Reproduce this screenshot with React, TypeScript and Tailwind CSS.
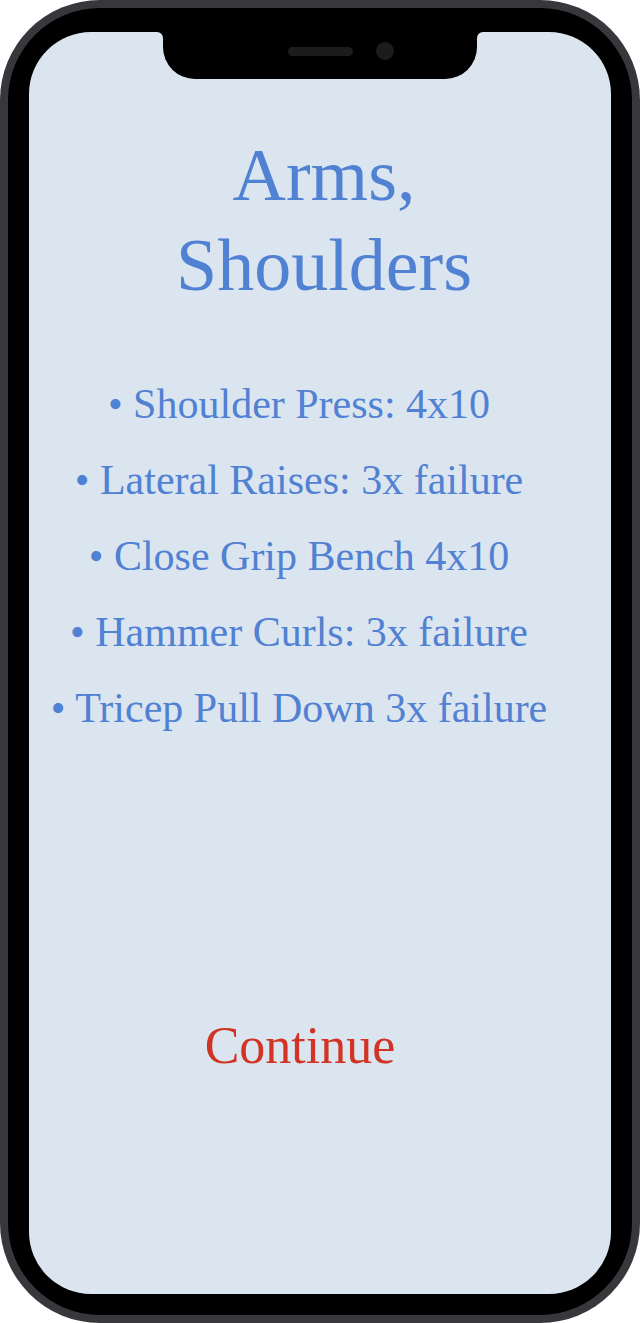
const exercises = [
  'Shoulder Press: 4x10',
  'Lateral Raises: 3x failure',
  'Close Grip Bench 4x10',
  'Hammer Curls: 3x failure',
  'Tricep Pull Down 3x failure',
];

function Notch() {
  return (
    <div className="absolute left-[134px] top-0 w-[314px] h-[47px] bg-black rounded-b-[32px] flex items-start pl-[125px] pt-[10px] gap-[23px]">
      {/* little fillets where the notch meets the screen edge */}
      <div className="absolute -left-[6px] top-0 w-[6px] h-[6px] bg-black">
        <div className="w-full h-full bg-[#dbe5f0] rounded-tr-[6px]" />
      </div>
      <div className="absolute -right-[6px] top-0 w-[6px] h-[6px] bg-black">
        <div className="w-full h-full bg-[#dbe5f0] rounded-tl-[6px]" />
      </div>
      <div className="mt-[5px] w-[65px] h-[9px] rounded-full bg-[#1c1c1c]" />
      <div className="w-[18px] h-[18px] rounded-full bg-[#1c1c1c]" />
    </div>
  );
}

export default function App() {
  return (
    <div className="w-[640px] h-[1323px] bg-white">
      <div className="w-full h-full bg-[#38373c] rounded-[100px] p-[8px]">
        <div className="w-full h-full bg-black rounded-[92px] pt-[24px] px-[21px] pb-[21px]">
          <div
            className="relative w-full h-full bg-[#dbe5f0] rounded-[62px] overflow-hidden flex flex-col"
            style={{ fontFamily: '"Liberation Serif", "Times New Roman", serif' }}
          >
            <Notch />
            <h1 className="mt-[98px] mx-auto w-[420px] pl-[8px] text-center text-[74px] leading-[90px] font-normal text-[#5181d2]">
              Arms, Shoulders
            </h1>
            <ul className="mt-[56px] flex flex-col pr-[42px] text-center text-[42px] leading-[76px] text-[#5181d2]">
              {exercises.map((e) => (
                <li key={e}>• {e}</li>
              ))}
            </ul>
            <button className="mt-[270px] pr-[40px] text-center text-[52px] leading-[60px] text-[#d13324]">
              Continue
            </button>
          </div>
        </div>
      </div>
    </div>
  );
}
